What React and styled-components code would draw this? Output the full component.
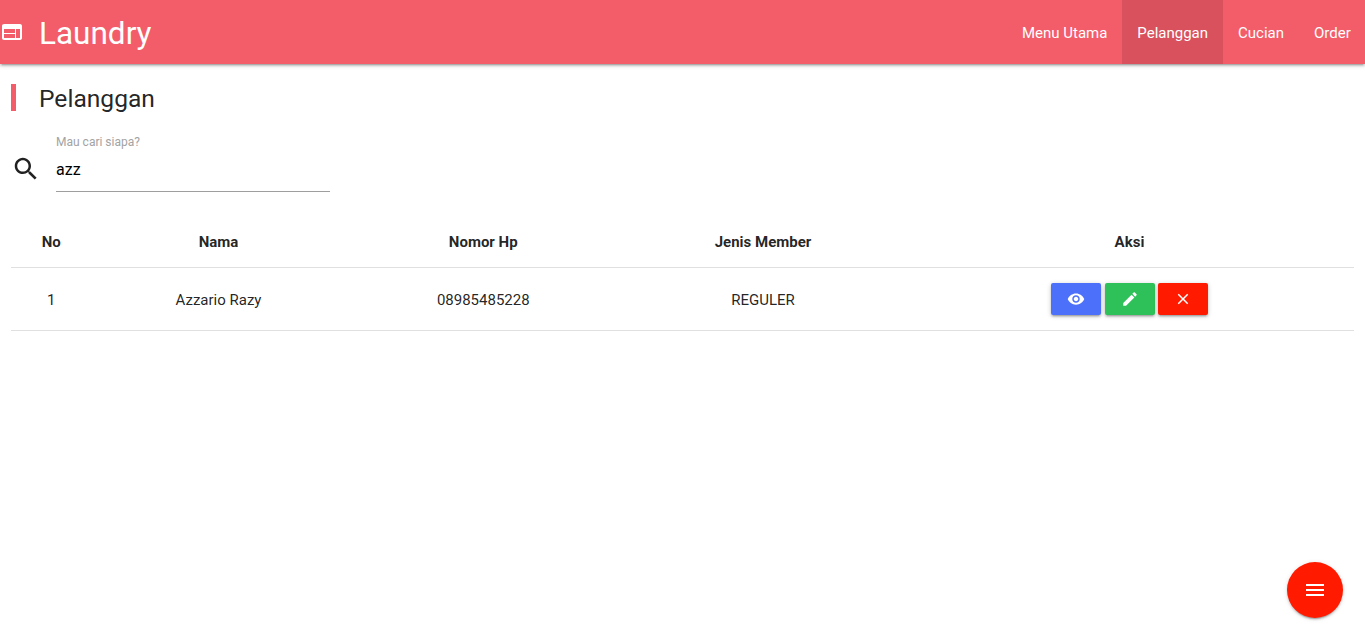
import { createGlobalStyle } from 'styled-components';
import styled from 'styled-components';

const GlobalStyle = createGlobalStyle`
  html, body {
    margin: 0;
    padding: 0;
    background: #fff;
    font-family: Roboto, "Liberation Sans", sans-serif;
    font-size: 15px;
    color: rgba(0, 0, 0, 0.87);
  }
`;

const Navbar = styled.nav`
  height: 64px;
  background: #f35c69;
  color: #fff;
  display: flex;
  align-items: center;
  justify-content: space-between;
  box-shadow: 0 2px 2px 0 rgba(0,0,0,.14), 0 3px 1px -2px rgba(0,0,0,.12), 0 1px 5px 0 rgba(0,0,0,.2);
`;

const Brand = styled.div`
  display: flex;
  align-items: center;
  font-size: 31.5px;
  gap: 15px;
  svg { display: block; }
  span { padding-top: 2px; }
`;

const NavLinks = styled.ul`
  display: flex;
  list-style: none;
  margin: 0;
  padding: 0;
  height: 64px;
`;

const NavLink = styled.li`
  padding: 0 15px;
  height: 64px;
  line-height: 66px;
  font-size: 15px;
  background: ${(p) => (p.$active ? 'rgba(0, 0, 0, 0.11)' : 'transparent')};
  &:last-child { padding-right: 14.2px; }
`;

const Content = styled.main`
  padding: 20px 11px 0;
`;

const Title = styled.h2`
  margin: 0;
  border-left: 5px solid #f35c69;
  padding-left: 23px;
  height: 27px;
  line-height: 30px;
  font-size: 24.6px;
  font-weight: 400;
`;

const SearchRow = styled.div`
  display: flex;
  align-items: flex-start;
  margin-top: 21px;
`;

const SearchIcon = styled.div`
  width: 45px;
  padding-top: 22px;
  svg { display: block; }
`;

const Field = styled.div`
  width: 274px;
  height: 59px;
  border-bottom: 1px solid #9e9e9e;
`;

const Label = styled.label`
  display: block;
  padding-top: 3px;
  font-size: 12px;
  line-height: 14px;
  color: #a3a3a3;
`;

const Value = styled.div`
  margin-top: 9px;
  font-size: 16px;
  line-height: 24px;
  color: #000;
`;

const Table = styled.table`
  width: 1343px;
  margin-top: 25px;
  border-collapse: collapse;
  table-layout: fixed;
  text-align: center;
  font-size: 15px;

  th {
    height: 50px;
    padding: 0 5px;
    font-weight: 700;
    border-bottom: 1px solid #e0e0e0;
  }

  td {
    height: 60px;
    padding: 2px 5px 0;
    border-bottom: 1px solid #e0e0e0;
  }
`;

const Actions = styled.div`
  display: flex;
  justify-content: center;
  gap: 3.75px;
  margin-top: -2px;
`;

const ActionButton = styled.button`
  width: 50px;
  height: 32px;
  padding: 0;
  border: none;
  border-radius: 2px;
  color: #fff;
  background: ${(p) => p.$color};
  display: flex;
  align-items: center;
  justify-content: center;
  box-shadow: 0 2px 2px 0 rgba(0,0,0,.14), 0 3px 1px -2px rgba(0,0,0,.12), 0 1px 5px 0 rgba(0,0,0,.2);
`;

const Fab = styled.button`
  position: fixed;
  right: 22px;
  bottom: 22px;
  width: 56px;
  height: 56px;
  padding: 0;
  border: none;
  border-radius: 50%;
  background: #ff1a00;
  color: #fff;
  display: flex;
  align-items: center;
  justify-content: center;
  box-shadow: 0 2px 2px 0 rgba(0,0,0,.14), 0 1px 5px 0 rgba(0,0,0,.12), 0 3px 1px -2px rgba(0,0,0,.2);
`;

const Icon = ({ d, size = 24 }) => (
  <svg width={size} height={size} viewBox="0 0 24 24" fill="currentColor">
    <path d={d} />
  </svg>
);

const icons = {
  web: 'M20 4H4c-1.1 0-1.99.9-1.99 2L2 18c0 1.1.9 2 2 2h16c1.1 0 2-.9 2-2V6c0-1.1-.9-2-2-2zm-5 14H4v-4h11v4zm0-5H4V9h11v4zm5 5h-4V9h4v9z',
  search: 'M15.5 14h-.79l-.28-.27C15.41 12.59 16 11.11 16 9.5 16 5.91 13.09 3 9.5 3S3 5.91 3 9.5 5.91 16 9.5 16c1.61 0 3.09-.59 4.23-1.57l.27.28v.79l5 4.99L20.49 19l-4.99-5zm-6 0C7.01 14 5 11.99 5 9.5S7.01 5 9.5 5 14 7.01 14 9.5 11.99 14 9.5 14z',
  eye: 'M12 4.5C7 4.5 2.73 7.61 1 12c1.73 4.39 6 7.5 11 7.5s9.27-3.11 11-7.5c-1.73-4.39-6-7.5-11-7.5zM12 17c-2.76 0-5-2.24-5-5s2.24-5 5-5 5 2.24 5 5-2.24 5-5 5zm0-8c-1.66 0-3 1.34-3 3s1.34 3 3 3 3-1.34 3-3-1.34-3-3-3z',
  edit: 'M3 17.25V21h3.75L17.81 9.94l-3.75-3.75L3 17.25zM20.71 7.04c.39-.39.39-1.02 0-1.41l-2.34-2.34c-.39-.39-1.02-.39-1.41 0l-1.83 1.83 3.75 3.75 1.83-1.83z',
  close: 'M19 6.41L17.59 5 12 10.59 6.41 5 5 6.41 10.59 12 5 17.59 6.41 19 12 13.41 17.59 19 19 17.59 13.41 12z',
  menu: 'M3 18h18v-2H3v2zm0-5h18v-2H3v2zm0-7v2h18V6H3z',
};

const links = ['Menu Utama', 'Pelanggan', 'Cucian', 'Order'];
const columns = [
  { label: 'No', width: 80.5 },
  { label: 'Nama', width: 254 },
  { label: 'Nomor Hp', width: 275.5 },
  { label: 'Jenis Member', width: 284 },
  { label: 'Aksi', width: 449 },
];

export default function App() {
  return (
    <>
      <GlobalStyle />
      <Navbar>
        <Brand>
          <Icon d={icons.web} />
          <span>Laundry</span>
        </Brand>
        <NavLinks>
          {links.map((link) => (
            <NavLink key={link} $active={link === 'Pelanggan'}>{link}</NavLink>
          ))}
        </NavLinks>
      </Navbar>
      <Content>
        <Title>Pelanggan</Title>
        <SearchRow>
          <SearchIcon>
            <Icon d={icons.search} size={30} />
          </SearchIcon>
          <Field>
            <Label>Mau cari siapa?</Label>
            <Value>azz</Value>
          </Field>
        </SearchRow>
        <Table>
          <colgroup>
            {columns.map((col) => (
              <col key={col.label} width={col.width} />
            ))}
          </colgroup>
          <thead>
            <tr>
              {columns.map((col) => (
                <th key={col.label}>{col.label}</th>
              ))}
            </tr>
          </thead>
          <tbody>
            <tr>
              <td>1</td>
              <td>Azzario Razy</td>
              <td>08985485228</td>
              <td>REGULER</td>
              <td>
                <Actions>
                  <ActionButton $color="#4d70fa"><Icon d={icons.eye} size={18} /></ActionButton>
                  <ActionButton $color="#2ec15a"><Icon d={icons.edit} size={18} /></ActionButton>
                  <ActionButton $color="#ff1a00"><Icon d={icons.close} size={18} /></ActionButton>
                </Actions>
              </td>
            </tr>
          </tbody>
        </Table>
      </Content>
      <Fab><Icon d={icons.menu} /></Fab>
    </>
  );
}
